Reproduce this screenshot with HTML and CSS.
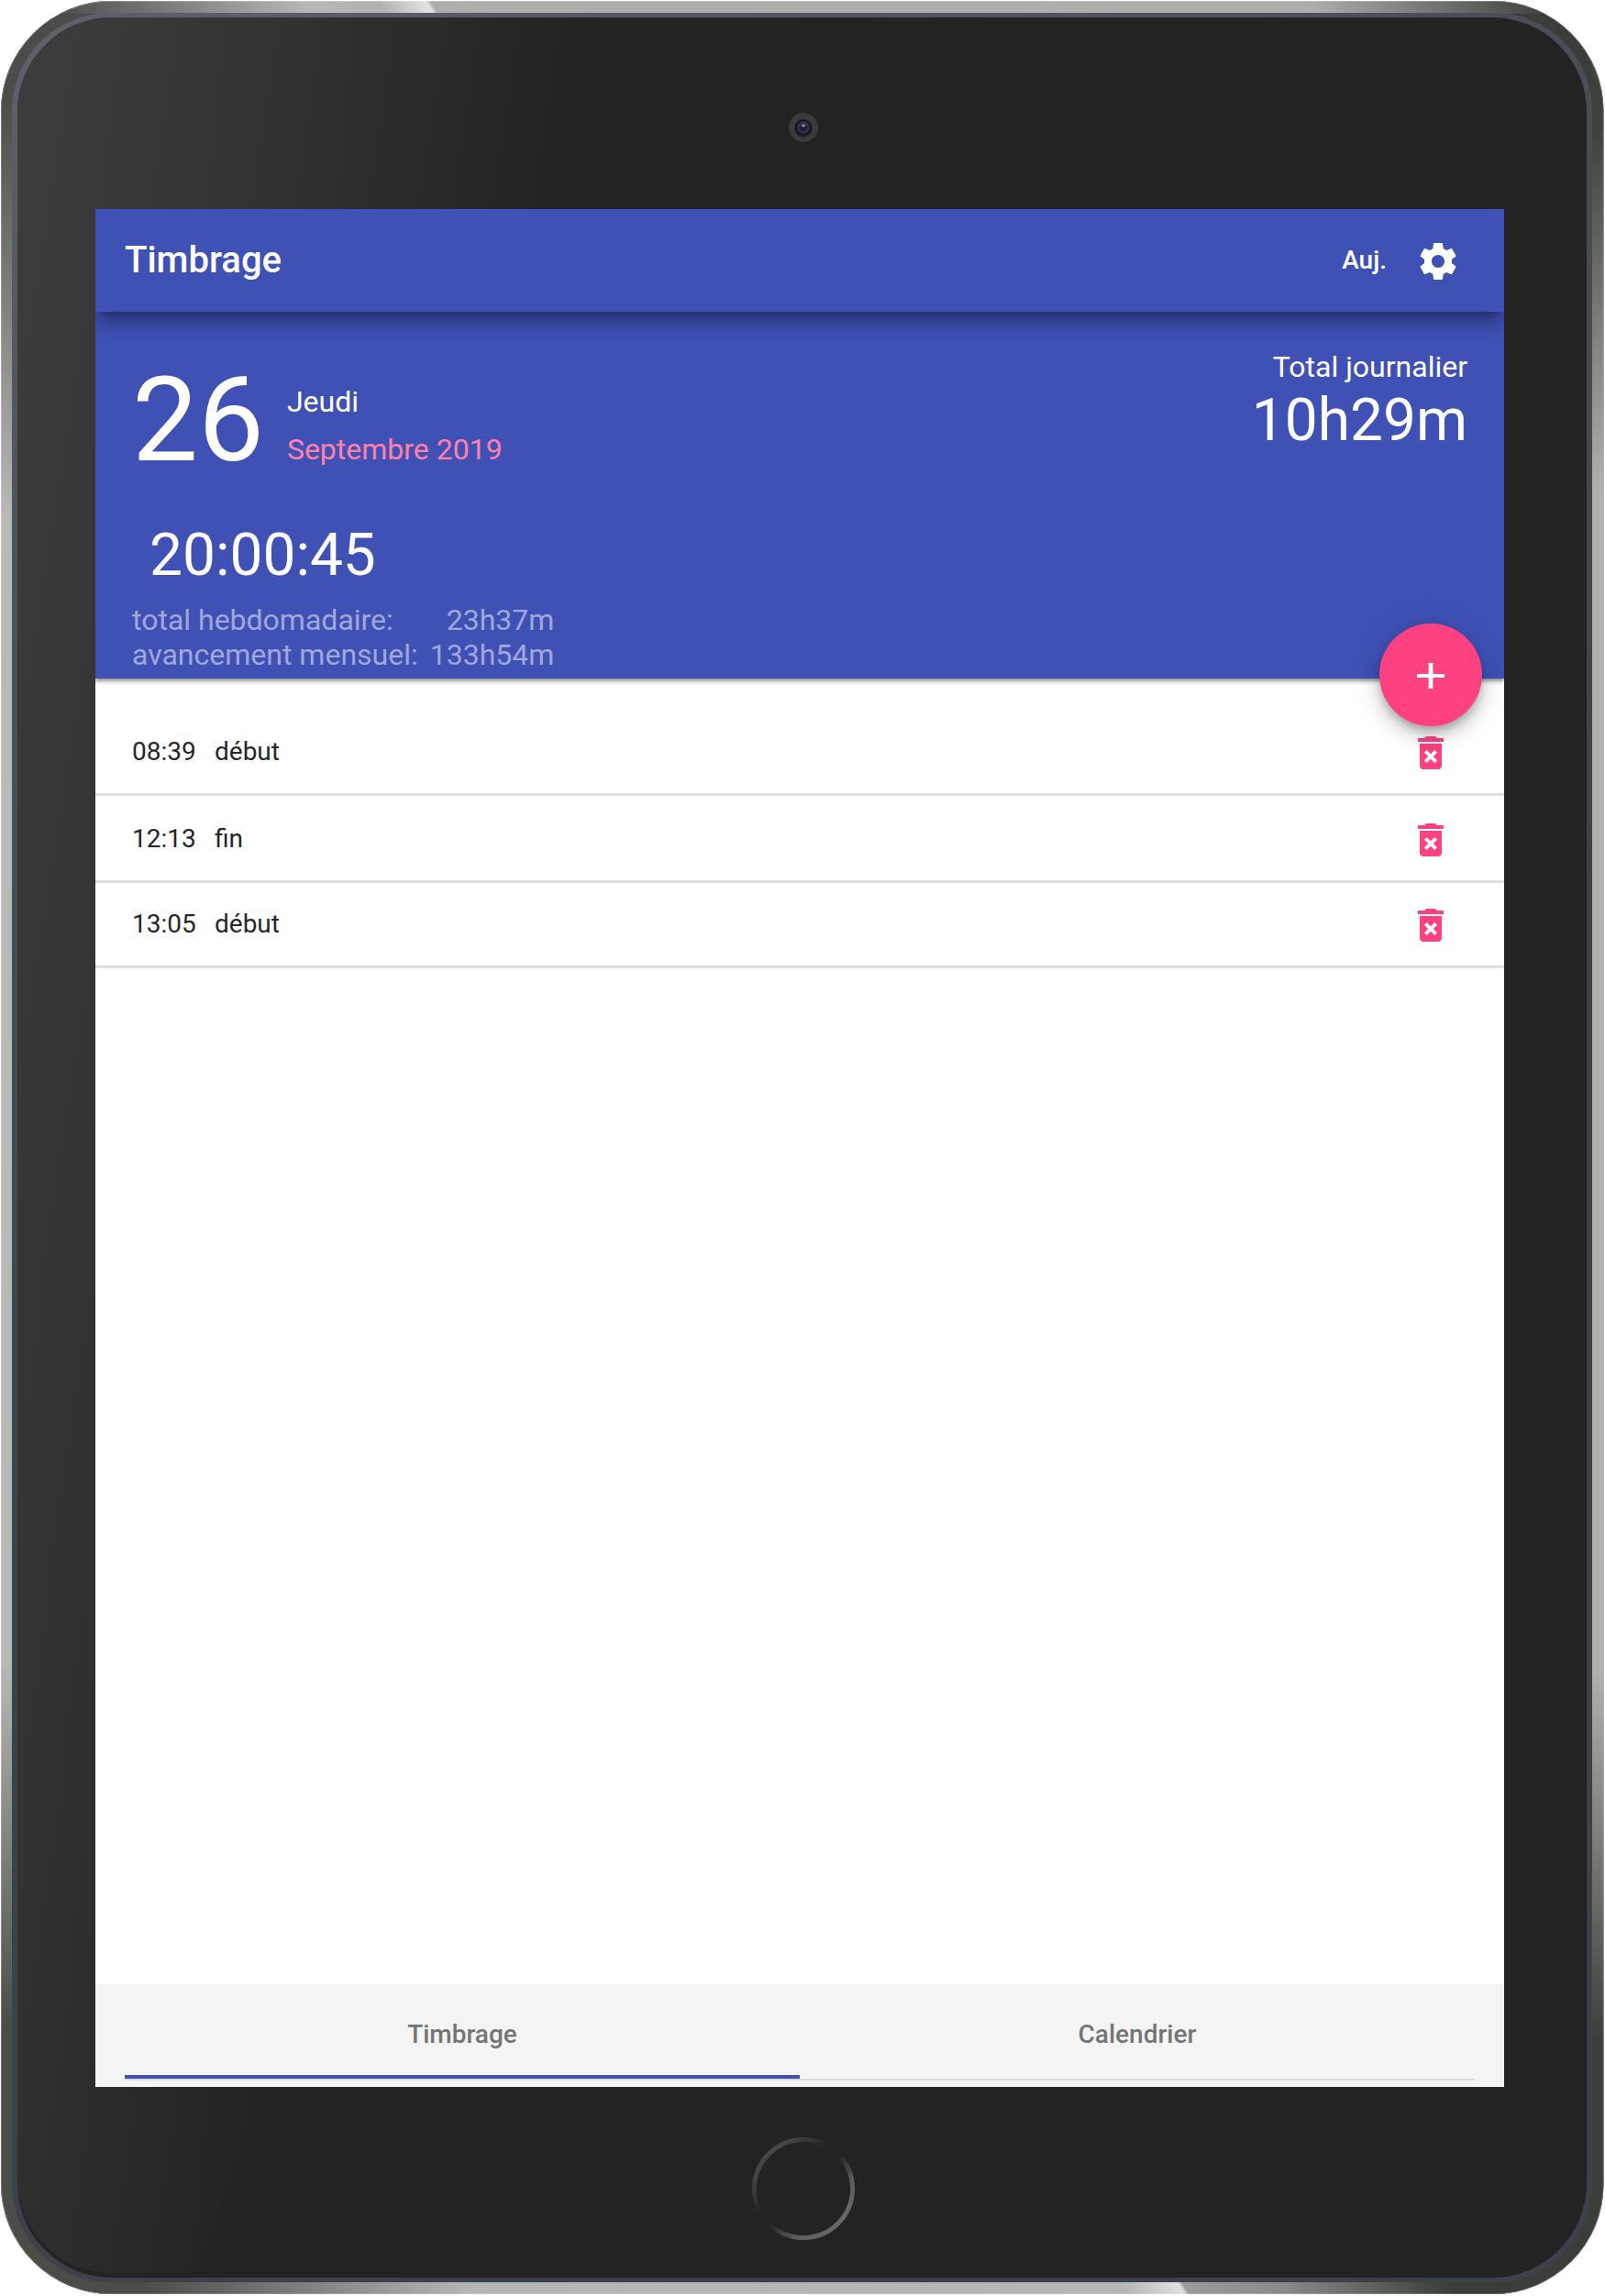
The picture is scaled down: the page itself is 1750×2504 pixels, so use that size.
FILE: index.html
```html
<!DOCTYPE html>
<html lang="fr">
<head>
<meta charset="utf-8">
<title>Timbrage</title>
<link rel="stylesheet" href="styles.css">
</head>
<body>
<div class="device">
  <svg class="shell" viewBox="0 0 1750 2504" aria-hidden="true">
    <defs>
      <clipPath id="body"><rect x="1" y="1" width="1747.5" height="2501" rx="120"/></clipPath>
      <clipPath id="glass"><rect x="19" y="19" width="1711" height="2460" rx="103"/></clipPath>
      <linearGradient id="base"><stop offset="0" stop-color="#4b4d49"/><stop offset="1" stop-color="#3a3e39"/></linearGradient>
      <linearGradient id="left" x2="0" y2="1"><stop offset=".02" stop-color="#4b4d49"/><stop offset=".21" stop-color="#b8b8b8"/><stop offset=".735" stop-color="#b8b8b8"/><stop offset=".9" stop-color="#4b4d49"/></linearGradient>
      <linearGradient id="right" x2="0" y2="1"><stop offset=".035" stop-color="#3e423d"/><stop offset=".2" stop-color="#afb1ad"/><stop offset=".74" stop-color="#afb1ad"/><stop offset=".91" stop-color="#3a3e39"/></linearGradient>
      <linearGradient id="top" gradientUnits="userSpaceOnUse" x1="0" x2="1750" y1="0" y2="0" gradientTransform="skewX(30)"><stop offset=".03" stop-color="#4b4d49"/><stop offset=".19" stop-color="#b8b8b8"/><stop offset=".235" stop-color="#b0b3b0"/><stop offset=".265" stop-color="#e2e4e3"/><stop offset=".268" stop-color="#abaeaa"/><stop offset=".815" stop-color="#abaeaa"/><stop offset=".96" stop-color="#3e423d"/></linearGradient>
      <linearGradient id="bottom" gradientUnits="userSpaceOnUse" x1="0" x2="1750" y1="0" y2="0" gradientTransform="translate(-1441 0) skewX(30)"><stop offset=".09" stop-color="#4b4d49"/><stop offset=".29" stop-color="#b4b4b4"/><stop offset=".7" stop-color="#b4b5b4"/><stop offset=".736" stop-color="#e0e1e1"/><stop offset=".739" stop-color="#999c98"/><stop offset=".8" stop-color="#888b87"/><stop offset=".905" stop-color="#3a3e39"/></linearGradient>
      <linearGradient id="rim" gradientUnits="userSpaceOnUse" x1="0" y1="0" x2="700" y2="1500"><stop offset="0" stop-color="#5f626d"/><stop offset=".4" stop-color="#4b4f5a"/><stop offset="1" stop-color="#3c414b"/></linearGradient>
      <linearGradient id="glare" gradientUnits="userSpaceOnUse" x1="20" y1="20" x2="607" y2="107"><stop offset="0" stop-color="#3d3d3d"/><stop offset=".5" stop-color="#323232"/><stop offset="1" stop-color="#232323"/></linearGradient>
      <linearGradient id="home" x1=".1" y1=".1" x2=".9" y2=".9"><stop offset="0" stop-color="#484848"/><stop offset=".12" stop-color="#444"/><stop offset=".38" stop-color="#232323"/><stop offset=".52" stop-color="#232323"/><stop offset=".75" stop-color="#5c5c5c"/><stop offset="1" stop-color="#6a6a6a"/></linearGradient>
    </defs>
    <g clip-path="url(#body)">
      <rect width="1750" height="2504" fill="url(#base)"/>
      <rect y="60" width="14" height="2384" fill="url(#left)"/>
      <rect x="1735" y="60" width="15" height="2384" fill="url(#right)"/>
      <rect x="50" width="1650" height="15" fill="url(#top)"/>
      <rect x="50" y="2489" width="1650" height="15" fill="url(#bottom)"/>
      <rect x="1" y="1" width="1747.5" height="2501" rx="120" fill="none" stroke="#fff" stroke-opacity=".3" stroke-width="1.5"/>
    </g>
    <rect x="13" y="14" width="1723" height="2475" rx="107" fill="url(#rim)"/>
    <rect x="19" y="19" width="1711" height="2465" rx="103" fill="#232323"/>
    <path d="M0 0H1236L211 2479H0Z" fill="url(#glare)" clip-path="url(#glass)"/>
    <circle cx="876" cy="139" r="16" fill="#3b3b3b"/>
    <circle cx="876" cy="140" r="10" fill="#262429"/>
    <circle cx="876" cy="139" r="9" fill="#18151f"/>
    <circle cx="876" cy="139" r="5.5" fill="#231d31" stroke="#3d2b5b" stroke-width="2.5"/>
    <ellipse cx="876" cy="137" rx="2.2" ry="1.4" fill="#8b8791"/>
    <circle cx="876" cy="2387" r="53.5" fill="none" stroke="url(#home)" stroke-width="5"/>
  </svg>

  <main class="screen">
    <header class="toolbar">
      <h1 class="title">Timbrage</h1>
      <span class="today">Auj.</span>
      <svg class="gear" viewBox="0 0 24 24"><path d="M19.43 12.98c.04-.32.07-.64.07-.98s-.03-.66-.07-.98l2.11-1.65c.19-.15.24-.42.12-.64l-2-3.46c-.12-.22-.39-.3-.61-.22l-2.49 1c-.52-.4-1.08-.73-1.69-.98l-.38-2.65C14.46 2.18 14.25 2 14 2h-4c-.25 0-.46.18-.49.42l-.38 2.65c-.61.25-1.17.59-1.69.98l-2.49-1c-.23-.09-.49 0-.61.22l-2 3.46c-.13.22-.07.49.12.64l2.11 1.65c-.04.32-.07.65-.07.98s.03.66.07.98l-2.11 1.65c-.19.15-.24.42-.12.64l2 3.46c.12.22.39.3.61.22l2.49-1c.52.4 1.08.73 1.69.98l.38 2.65c.03.24.24.42.49.42h4c.25 0 .46-.18.49-.42l.38-2.65c.61-.25 1.17-.59 1.69-.98l2.49 1c.23.09.49 0 .61-.22l2-3.46c.12-.22.07-.49-.12-.64l-2.11-1.65zM12 15.5c-1.93 0-3.5-1.57-3.5-3.5s1.57-3.5 3.5-3.5 3.5 1.57 3.5 3.5-1.57 3.5-3.5 3.5z"/></svg>
    </header>

    <section class="summary">
      <div class="summary-main">
        <div class="date">
          <span class="day">26</span>
          <div class="date-text"><div>Jeudi</div><div class="month">Septembre 2019</div></div>
        </div>
        <div class="clock">20:00:45</div>
        <div class="totals">
          <span>total hebdomadaire:</span><span class="value">23h37m</span>
          <span>avancement mensuel:</span><span class="value">133h54m</span>
        </div>
      </div>
      <div class="daily">
        <div class="daily-label">Total journalier</div>
        <div class="daily-value">10h29m</div>
      </div>
      <button class="fab" aria-label="Ajouter"><svg viewBox="0 0 30 28"><path d="M12.6 0h4.8v12H30v4H17.4v12h-4.8V16H0v-4h12.6z"/></svg></button>
    </section>

    <ul class="entries">
      <li class="entry"><span class="time">08:39</span><span class="kind">début</span><svg class="trash" viewBox="0 0 24 24"><path d="M6 19c0 1.1.9 2 2 2h8c1.1 0 2-.9 2-2V7H6v12zm2.46-7.12l1.41-1.41L12 12.59l2.12-2.12 1.41 1.41L13.41 14l2.12 2.12-1.41 1.41L12 15.41l-2.12 2.12-1.41-1.41L10.59 14l-2.13-2.12zM15.5 4l-1-1h-5l-1 1H5v2h14V4z"/></svg></li>
      <li class="entry"><span class="time">12:13</span><span class="kind">fin</span><svg class="trash" viewBox="0 0 24 24"><path d="M6 19c0 1.1.9 2 2 2h8c1.1 0 2-.9 2-2V7H6v12zm2.46-7.12l1.41-1.41L12 12.59l2.12-2.12 1.41 1.41L13.41 14l2.12 2.12-1.41 1.41L12 15.41l-2.12 2.12-1.41-1.41L10.59 14l-2.13-2.12zM15.5 4l-1-1h-5l-1 1H5v2h14V4z"/></svg></li>
      <li class="entry entry-last"><span class="time">13:05</span><span class="kind">début</span><svg class="trash" viewBox="0 0 24 24"><path d="M6 19c0 1.1.9 2 2 2h8c1.1 0 2-.9 2-2V7H6v12zm2.46-7.12l1.41-1.41L12 12.59l2.12-2.12 1.41 1.41L13.41 14l2.12 2.12-1.41 1.41L12 15.41l-2.12 2.12-1.41-1.41L10.59 14l-2.13-2.12zM15.5 4l-1-1h-5l-1 1H5v2h14V4z"/></svg></li>
    </ul>

    <nav class="tabs">
      <a class="tab tab-active">Timbrage</a>
      <a class="tab">Calendrier</a>
    </nav>
  </main>
</div>
</body>
</html>
```
FILE: styles.css
```css
* { box-sizing: border-box; }

body {
  margin: 0;
  background: #fff;
  font-family: Roboto, "Liberation Sans", sans-serif;
}

.device {
  position: relative;
  width: 1750px;
  height: 2504px;
  padding: 228px 110px 228px 104px;
  overflow: hidden;
}

.shell {
  position: absolute;
  inset: 0;
  width: 100%;
  height: 100%;
}

.screen {
  position: relative;
  display: flex;
  flex-direction: column;
  height: 2048px;
  background: #fff;
  overflow: hidden;
}

.toolbar {
  position: relative;
  z-index: 2;
  flex: none;
  display: flex;
  align-items: center;
  height: 112px;
  padding: 0 48px 0 32px;
  background: #3f51b5;
  color: #fff;
  box-shadow: 0 10px 12px -6px rgba(0, 0, 0, .2), 0 14px 24px 2px rgba(0, 0, 0, .12), 0 8px 20px -2px rgba(0, 0, 0, .26);
}

.title {
  flex: 1;
  margin: 0;
  font-size: 40px;
  font-weight: 500;
  line-height: 112px;
}

.today {
  margin-right: 32px;
  padding-bottom: 2px;
  font-size: 28px;
  font-weight: 500;
}

.gear {
  width: 48px;
  height: 48px;
  margin-top: 2px;
  fill: #fff;
}

.summary {
  position: relative;
  z-index: 1;
  flex: none;
  display: flex;
  justify-content: space-between;
  height: 400px;
  padding: 41px 40px 0;
  background: #3f51b5;
  color: #fff;
  font-size: 32px;
  line-height: 38px;
  box-shadow: 0 3px 4px rgba(0, 0, 0, .42);
}

.summary-main { padding-top: 12px; }

.date {
  display: flex;
  gap: 25px;
  height: 175px;
}

.day {
  padding-top: 1px;
  font-size: 128px;
  line-height: 128px;
}

.date-text {
  padding-top: 19px;
  line-height: 52px;
}

.month { color: #ff80ab; }

.clock {
  padding-left: 19px;
  font-size: 64px;
  line-height: 76px;
}

.totals {
  display: grid;
  grid-template-columns: auto auto;
  justify-content: start;
  column-gap: 13px;
  margin-top: 13px;
  color: #9fa8da;
}

.value { text-align: right; }

.daily { text-align: right; }

.daily-value {
  padding-top: 2px;
  font-size: 64px;
  line-height: 76px;
}

.fab {
  position: absolute;
  right: 24px;
  bottom: -52px;
  display: flex;
  align-items: center;
  justify-content: center;
  width: 112px;
  height: 112px;
  padding: 2px 0 0;
  border: 0;
  border-radius: 50%;
  background: #ff4081;
  box-shadow: 0 6px 10px -2px rgba(0, 0, 0, .24), 0 12px 20px rgba(0, 0, 0, .14), 0 2px 36px rgba(0, 0, 0, .12);
}

.fab svg {
  width: 30px;
  height: 28px;
  fill: #fff;
}

.entries {
  flex: 1;
  margin: 0;
  padding: 33px 0 0;
  list-style: none;
  color: #262626;
  font-size: 28px;
}

.entry {
  display: flex;
  align-items: center;
  height: 95px;
  padding: 0 56px 0 40px;
  border-bottom: 3px solid #dfdfdf;
}

.entry-last {
  height: 93px;
  padding-bottom: 2px;
}

.time { width: 90px; }

.kind { flex: 1; }

.trash {
  width: 48px;
  height: 48px;
  margin-top: 4px;
  fill: #ff4081;
}

.tabs {
  flex: none;
  display: flex;
  height: 112px;
  padding: 0 32px 7px;
  background: #f4f4f4;
}

.tab {
  flex: 1;
  border-bottom: 2px solid #dadada;
  color: #757575;
  font-size: 28px;
  font-weight: 500;
  line-height: 110px;
  text-align: center;
}

.tab-active { box-shadow: inset 0 -4px #3f51b5; }
```
